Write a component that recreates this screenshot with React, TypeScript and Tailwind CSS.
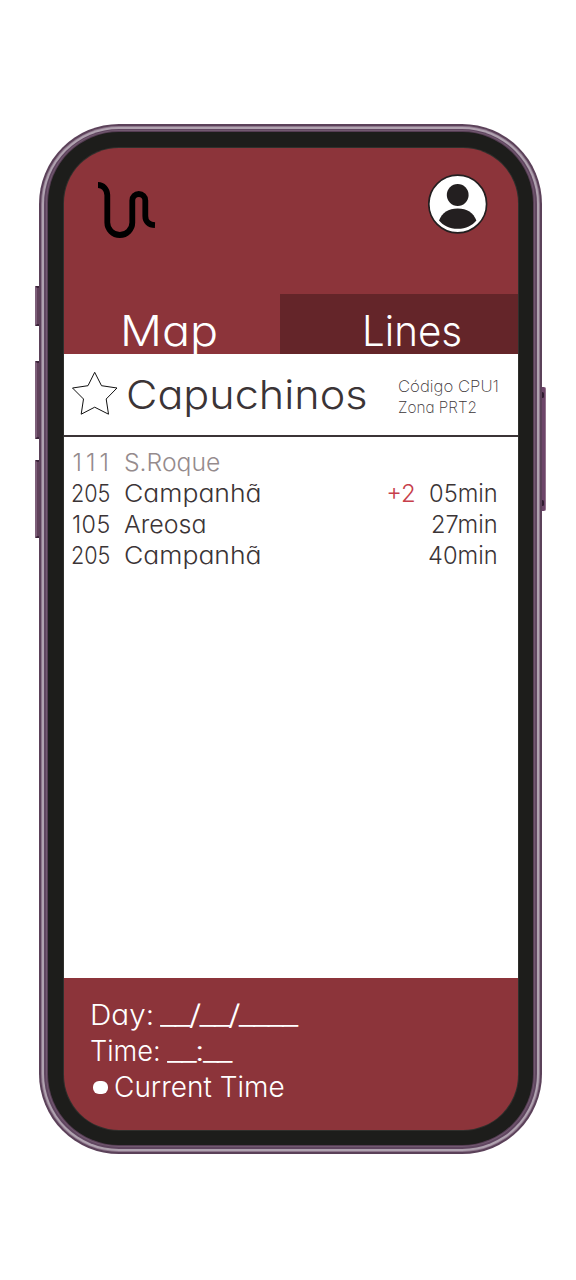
import React from "react";

type Departure = {
  line: string;
  lineStretch: string;
  stop: string;
  stretch: string;
  delay?: string;
  wait?: string;
  past?: boolean;
};

const departures: Departure[] = [
  { line: "111", lineStretch: "pl-[1.5px] tracking-[4px]", stop: "S.Roque", stretch: "scale-x-[1.03]", past: true },
  { line: "205", lineStretch: "scale-x-[0.9]", stop: "Campanhã", stretch: "scale-x-[1.105]", delay: "+2", wait: "05min" },
  { line: "105", lineStretch: "pl-[1px] tracking-[0.5px] scale-x-[0.97]", stop: "Areosa", stretch: "scale-x-[1.04]", wait: "27min" },
  { line: "205", lineStretch: "scale-x-[0.9]", stop: "Campanhã", stretch: "scale-x-[1.105]", wait: "40min" },
];

function Logo() {
  return (
    <svg className="ml-[34px] mt-[34px] h-[58px] w-[58px]" viewBox="0 0 58 58" fill="none">
      <path
        d="M0 3 C5 3 9 7 9.300 13 V40.500 A12.500 12.500 0 0 0 34.300 40.500 V18.500 A6.500 6.500 0 0 1 47.300 18.500 V34 C47.300 39.500 51 43 57 43.200"
        stroke="#000"
        strokeWidth="5.800"
      />
    </svg>
  );
}

function Avatar() {
  return (
    <svg className="mr-[30px] mt-[26px] h-[60px] w-[60px]" viewBox="0 0 60 60">
      <circle cx="29.700" cy="30" r="28.900" fill="#fff" stroke="#231f20" strokeWidth="1.700" />
      <circle cx="29.700" cy="21" r="10.900" fill="#231f20" />
      <path d="M11 46.500 C14.200 38.500 20.200 34.500 29.700 34.500 S45.200 38.500 48.400 46.500 C44.200 51.500 38.200 54.800 29.700 54.800 S15.200 51.500 11 46.500Z" fill="#231f20" />
    </svg>
  );
}

function Star() {
  return (
    <svg className="ml-2 mt-[17px] h-[46px] w-[46px] shrink-0" viewBox="0 0 46 46" fill="none">
      <path d="M22.700 1.300 L29.500 14.700 L45 17 L34.200 28 L36.500 43.200 L22.700 36.200 L9.200 43.200 L11.500 28 L.5 17 L16 14.700Z" stroke="#111" strokeWidth="1" />
    </svg>
  );
}

export default function App() {
  return (
    <main className="relative h-[1280px] w-[576px] overflow-hidden bg-white pl-[39px] pt-[123.5px] font-['Inter','Noto_Sans',sans-serif] font-light whitespace-nowrap [font-feature-settings:'cv11']">
      <div className="absolute left-[34.500px] top-[286px] h-[40px] w-[6px] rounded-[1px] border-y-2 border-r border-l-2 border-y-[#3c243a] border-l-[#7d5f79] border-r-[#3c243a] bg-[#60405a]" />
      <div className="absolute left-[34.500px] top-[361px] h-[78px] w-[6px] rounded-[1px] border-y-2 border-r border-l-2 border-y-[#3c243a] border-l-[#7d5f79] border-r-[#3c243a] bg-[#60405a]" />
      <div className="absolute left-[34.500px] top-[459.500px] h-[78px] w-[6px] rounded-[1px] border-y-2 border-r border-l-2 border-y-[#3c243a] border-l-[#7d5f79] border-r-[#3c243a] bg-[#60405a]" />
      <div className="absolute left-[540px] top-[387px] flex h-[124px] w-[6px] flex-col items-center justify-between rounded-r-[2px] border-r border-[#94748e] bg-[#6d4569] py-[5px]">
        <i className="h-[6px] w-[3px] rounded-full bg-[#301b30]" />
        <i className="h-[6px] w-[3px] rounded-full bg-[#301b30]" />
      </div>

      <div className="relative h-[1030px] w-[502.5px] rounded-[80px] bg-[#5b4159] p-[2px]">
        <div className="h-full rounded-[78px] bg-[#8d768b] p-px">
          <div className="h-full rounded-[77px] bg-[#b0a3b0] p-[2px]">
            <div className="h-full rounded-[75px] bg-[#604660] p-[1.5px]">
              <div className="h-full rounded-[73px] bg-[#725970] p-px">
                <div className="h-full rounded-[72px] bg-[#553d53] p-px">
                  <div className="h-full rounded-[71px] bg-[#1d1d1b] pt-[16px] pr-[15.5px] pb-[15.5px] pl-[16px]">
                    <div className="flex h-full flex-col overflow-hidden rounded-[55px] bg-[#8c343a] ring-1 ring-[#2f2f2c]">
                      <header className="flex h-[206px] shrink-0 flex-col">
                        <div className="flex h-[146px] justify-between">
                          <Logo />
                          <Avatar />
                        </div>
                        <nav className="flex h-[60px] text-[42px] leading-[60px] text-white">
                          <div className="w-[216px] pl-[56px] pt-[6.5px]">
                            <span className="inline-block origin-left scale-x-[1.11]">Map</span>
                          </div>
                          <div className="flex-1 bg-[#642529] pl-[82px] pt-[7px]">
                            <span className="inline-block origin-left scale-x-[0.96]">Lines</span>
                          </div>
                        </nav>
                      </header>
                      <section className="flex h-[83px] shrink-0 border-b-2 border-[#3b3436] bg-white text-[#3b3436]">
                        <Star />
                        <h1 className="w-[272px] pl-[8.5px] text-[40px] leading-[82px]">
                          <span className="inline-block origin-left scale-x-[1.078]">Capuchinos</span>
                        </h1>
                        <div className="pl-[8px] pt-[22px] text-[16px] leading-[21px] font-extralight">
                          <p className="origin-left scale-x-[1.045]">Código CPU1</p>
                          <p className="origin-left scale-x-[0.96]">Zona PRT2</p>
                        </div>
                      </section>
                      <section className="flex-1 bg-white pt-[9.5px] text-[24px] leading-[31px] text-[#3b3436]">
                        {departures.map((d, i) => (
                          <div key={i} className={d.past ? "flex text-[#958b8d]" : "flex"}>
                            <span className="w-[53px] pl-[7.5px]">
                              <span className={`inline-block origin-left ${d.lineStretch}`}>{d.line}</span>
                            </span>
                            <span className="flex-1 pl-[7px]">
                              <span className={`inline-block origin-left ${d.stretch}`}>{d.stop}</span>
                            </span>
                            <span className="mr-[12.5px] text-[#c73f4b]">{d.delay}</span>
                            <span className="mr-[19.5px] inline-block origin-right scale-x-[0.985]">{d.wait}</span>
                          </div>
                        ))}
                      </section>
                      <footer className="h-[151.500px] shrink-0 pl-[26px] pt-[19px] text-[28px] leading-[36px] text-white">
                        <p className="flex">
                          <span className="w-[70.5px]"><span className="inline-block origin-left scale-x-[1.06]">Day:</span></span>
                          <span className="origin-left scale-x-[1.3] tracking-[-1.5px]">__/__/____</span>
                        </p>
                        <p className="flex">
                          <span className="w-[77.5px]"><span className="inline-block origin-left scale-x-[0.97]">Time:</span></span>
                          <span className="origin-left scale-x-[1.26] tracking-[-1.5px]">__:__</span>
                        </p>
                        <p className="flex items-center">
                          <i className="ml-[3px] mr-[6.5px] h-[13px] w-[15px] rounded-[6px] bg-white" />
                          Current Time
                        </p>
                      </footer>
                    </div>
                  </div>
                </div>
              </div>
            </div>
          </div>
        </div>
      </div>
    </main>
  );
}
